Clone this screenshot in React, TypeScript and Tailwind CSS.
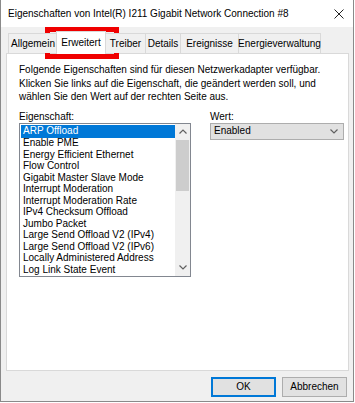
const ITEMS = [
  "ARP Offload",
  "Enable PME",
  "Energy Efficient Ethernet",
  "Flow Control",
  "Gigabit Master Slave Mode",
  "Interrupt Moderation",
  "Interrupt Moderation Rate",
  "IPv4 Checksum Offload",
  "Jumbo Packet",
  "Large Send Offload V2 (IPv4)",
  "Large Send Offload V2 (IPv6)",
  "Locally Administered Address",
  "Log Link State Event",
];

const TABS = [
  { label: "Allgemein", w: "w-[49px]" },
  { label: "Erweitert", w: "w-[50px]", active: true },
  { label: "Treiber", w: "w-[40px]" },
  { label: "Details", w: "w-[35px]" },
  { label: "Ereignisse", w: "w-[58px]" },
  { label: "Energieverwaltung", w: "w-[83px]" },
];

const Chevron = ({ up = false }: { up?: boolean }) => (
  <svg width="8" height="5" viewBox="0 0 8 5" className="block">
    <path
      d={up ? "M0.5 4.5 L4 1 L7.5 4.5" : "M0.5 0.5 L4 4 L7.5 0.5"}
      fill="none"
      stroke="#606060"
      strokeWidth="1.2"
    />
  </svg>
);

const Button = ({ label, primary = false }: { label: string; primary?: boolean }) => (
  <div
    className={`flex h-[20px] w-[65px] items-center justify-center bg-[#e1e1e1] text-black ${
      primary ? "border-2 border-[#0078d7]" : "border border-[#adadad]"
    }`}
  >
    {label}
  </div>
);

export default function App() {
  return (
    <div
      className="relative h-[403px] w-[355px] bg-white text-[10px] leading-[12px] text-black"
      style={{ fontFamily: '"Liberation Sans", Arial, sans-serif' }}
    >
      <div className="flex h-[402px] w-[354px] flex-col border border-t-0 border-[#8a8a8a] bg-[#f0f0f0]">
        {/* title bar */}
        <div className="flex h-[27px] shrink-0 items-center justify-between bg-white pl-[7px] pr-[9px] text-[10px]">
          <span>Eigenschaften von Intel(R) I211 Gigabit Network Connection #8</span>
          <svg width="10" height="10" viewBox="0 0 10 10">
            <path d="M0.5 0.5 L9.5 9.5 M9.5 0.5 L0.5 9.5" stroke="#222" strokeWidth="1" />
          </svg>
        </div>

        <div className="flex flex-1 flex-col px-[5px] pt-[4px]">
          {/* tabs */}
          <div className="relative z-10 flex h-[22px] shrink-0 items-end pl-[2px]">
            {TABS.map((t) =>
              t.active ? (
                <div
                  key={t.label}
                  className={`${t.w} -mx-[1px] -mb-[1px] flex h-[23px] items-center justify-center border border-b-0 border-[#d9d9d9] bg-white`}
                >
                  {t.label}
                </div>
              ) : (
                <div
                  key={t.label}
                  className={`${t.w} flex h-[20px] items-center justify-center border border-r-0 border-b-0 border-[#d9d9d9] bg-[#f0f0f0] last:border-r`}
                >
                  {t.label}
                </div>
              )
            )}
          </div>

          {/* panel */}
          <div className="flex h-[318px] w-[343px] shrink-0 flex-col border border-[#d9d9d9] bg-white px-[12px] pt-[9px]">
            <p className="leading-[13.5px]">
              Folgende Eigenschaften sind für diesen Netzwerkadapter verfügbar.
              <br />
              Klicken Sie links auf die Eigenschaft, die geändert werden soll, und
              <br />
              wählen Sie den Wert auf der rechten Seite aus.
            </p>

            <div className="mt-[7px] flex gap-[19px]">
              <div className="flex flex-col">
                <span className="h-[12px]">Eigenschaft:</span>
                <div className="flex h-[154px] w-[172px] border border-[#828790] bg-white">
                  <div className="flex-1 pl-[1px] pt-[1px]">
                    {ITEMS.map((it, i) => (
                      <div
                        key={it}
                        className={`flex items-center whitespace-nowrap pl-[2px] ${
                          i === 0 ? "h-[13px] bg-[#0078d7] text-white" : "h-[11.5px]"
                        }`}
                      >
                        {it}
                      </div>
                    ))}
                  </div>
                  <div className="flex w-[15px] flex-col bg-[#f0f0f0]">
                    <div className="flex h-[16px] items-center justify-center">
                      <Chevron up />
                    </div>
                    <div className="mx-[1px] h-[51px] bg-[#cdcdcd]" />
                    <div className="flex-1" />
                    <div className="flex h-[16px] items-center justify-center">
                      <Chevron />
                    </div>
                  </div>
                </div>
              </div>

              <div className="flex flex-col">
                <span className="h-[12px]">Wert:</span>
                <div className="flex h-[17px] w-[134px] items-center justify-between border border-[#adadad] bg-[#e1e1e1] pl-[3px] pr-[5px]">
                  <span>Enabled</span>
                  <Chevron />
                </div>
              </div>
            </div>
          </div>

          {/* buttons */}
          <div className="flex justify-end gap-[6px] pr-[1px] pt-[6px]">
            <Button label="OK" primary />
            <Button label="Abbrechen" />
          </div>
        </div>
      </div>

      {/* annotation box */}
      <div className="absolute left-[45px] top-[27px] h-[32px] w-[74px] border-[5px] border-[#f00000]" />
    </div>
  );
}
